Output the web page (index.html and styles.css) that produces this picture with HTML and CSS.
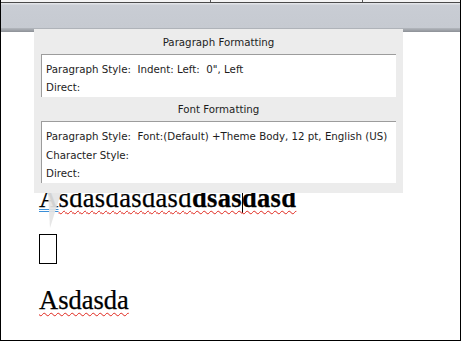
FILE: index.html
```html
<html>
  <head>
    <title>Reveal Formatting</title>
    <meta charset="utf-8" />
    <link rel="stylesheet" href="styles.css">
  </head>
  <body>
    <div id="window">
      <div class="toolbar">
        <div class="ruler">
          <span class="tick tick-a"></span>
          <span class="tick tick-b"></span>
        </div>
        <div class="ruler-line"></div>
        <div class="band"></div>
        <div class="band-shade"></div>
      </div>

      <div class="doc">
        <p class="line first"><span class="blue">A</span><span class="squig">sdasdasdasd<b>dsas<span class="caret"></span>dasd</b></span></p>
        <p class="line"><span class="empty-box"></span></p>
        <p class="line"><span class="squig">Asdasda</span></p>
      </div>

      <svg class="pointer" width="20" height="40" viewBox="0 0 20 40">
        <polygon points="1,0 14,0 3,35" fill="rgba(228,228,228,0.92)" />
      </svg>

      <div class="popup">
        <div class="heading">Paragraph Formatting</div>
        <div class="box">
          <div class="row">Paragraph Style:  Indent: Left:  0", Left</div>
          <div class="row">Direct:</div>
        </div>
        <div class="heading">Font Formatting</div>
        <div class="box tall">
          <div class="row">Paragraph Style:  Font:(Default) +Theme Body, 12 pt, English (US)</div>
          <div class="row">Character Style:</div>
          <div class="row">Direct:</div>
        </div>
      </div>
    </div>
  </body>
</html>
```

FILE: styles.css
```css
* {
  padding: 0;
  margin: 0;
}
body {
  background: white;
}
#window {
  position: relative;
  width: 461px;
  height: 341px;
  box-sizing: border-box;
  border: 1px solid #000;
  border-top: none;
  overflow: hidden;
  background: white;
}
.toolbar {
  height: 32px;
  display: flex;
  flex-direction: column;
}
.ruler {
  position: relative;
  height: 2px;
  background: #f4f4f4;
}
.tick {
  position: absolute;
  top: 0;
  width: 1px;
  height: 2px;
  background: #555;
}
.tick-a { left: 209px; }
.tick-b { left: 361px; }
.ruler-line {
  height: 1px;
  background: #4a4a4a;
}
.band {
  height: 25px;
  background: linear-gradient(#e2e4e8 0, #e2e4e8 1px, #c9cdd4 2px, #c6cad1 100%);
}
.band-shade {
  height: 4px;
  background: linear-gradient(#b4b8be, #8c9096);
}

.doc {
  padding-left: 38px;
  padding-top: 151px;
  font-family: "Liberation Serif", serif;
  font-size: 26.5px;
  color: #000;
  -webkit-text-stroke: 0.25px #000;
}
.line {
  line-height: 30px;
  height: 30px;
  white-space: nowrap;
}
.first {
  letter-spacing: 0.35px;
}
.line + .line {
  margin-top: 21px;
}
.squig {
  text-decoration: underline wavy #e0261c;
  text-decoration-thickness: 1px;
  text-underline-offset: 3px;
}
.blue {
  text-decoration: underline double #3b8fd8;
  text-decoration-thickness: 1px;
  text-underline-offset: 2px;
}
.caret {
  display: inline-block;
  width: 0;
  height: 24px;
  border-left: 1px solid #000;
  vertical-align: -6px;
  margin-right: -1px;
}
.empty-box {
  display: inline-block;
  width: 18px;
  height: 30px;
  box-sizing: border-box;
  border: 1px solid #000;
  vertical-align: top;
}

.pointer {
  position: absolute;
  left: 46px;
  top: 193px;
}
.popup {
  position: absolute;
  left: 33px;
  top: 29px;
  width: 369px;
  height: 164px;
  box-sizing: border-box;
  padding: 0 7px;
  background: #ececec;
  font-family: "DejaVu Sans", sans-serif;
  font-size: 10.25px;
  color: #1c1c1c;
}
.heading {
  height: 25px;
  line-height: 26px;
  text-align: center;
}
.heading + .box + .heading {
  height: 24px;
  line-height: 24px;
}
.box {
  height: 43px;
  box-sizing: border-box;
  padding: 5px 0 0 4px;
  background: white;
  border-top: 1px solid #9c9c9c;
  border-left: 1px solid #9c9c9c;
}
.box.tall {
  height: 62px;
}
.row {
  height: 18px;
  line-height: 18px;
  white-space: pre;
}
.tall .row {
  height: 18.5px;
  line-height: 18.5px;
}
```
